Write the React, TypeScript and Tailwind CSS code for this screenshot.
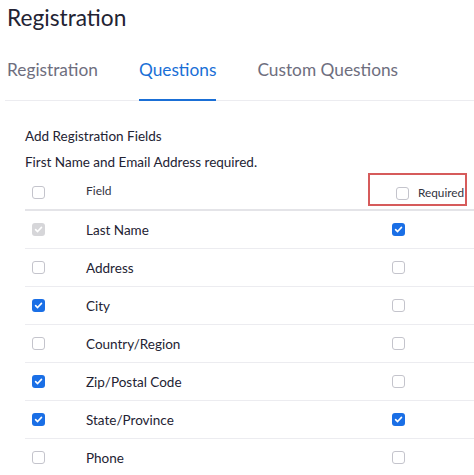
import React from 'react'

type Field = { name: string; on: boolean; required: boolean; locked?: boolean }

const fields: Field[] = [
  { name: 'Last Name', on: true, required: true, locked: true },
  { name: 'Address', on: false, required: false },
  { name: 'City', on: true, required: false },
  { name: 'Country/Region', on: false, required: false },
  { name: 'Zip/Postal Code', on: true, required: false },
  { name: 'State/Province', on: true, required: true },
  { name: 'Phone', on: false, required: false },
]

const Check = ({ checked, locked }: { checked: boolean; locked?: boolean }) => {
  if (!checked) {
    return <span className="block w-[13px] h-[13px] rounded-[3px] border border-[#c4c4cc] bg-white" />
  }
  return (
    <span
      className={
        locked
          ? 'flex items-center justify-center w-[13px] h-[13px] rounded-[3px] bg-[#d6d6d9]'
          : 'flex items-center justify-center w-[13px] h-[13px] rounded-[3px] bg-[#1a6fe6]'
      }
    >
      <svg width="9" height="9" viewBox="0 0 10 10" fill="none">
        <path d="M1.8 5.2 4 7.3 8.3 2.6" stroke="white" strokeWidth="1.8" strokeLinecap="round" strokeLinejoin="round" />
      </svg>
    </span>
  )
}

const tabs = ['Registration', 'Questions', 'Custom Questions']

export default function App() {
  return (
    <div className="w-[474px] h-[475px] overflow-hidden bg-white text-[#232333]" style={{ fontFamily: 'Lato, "Noto Sans", sans-serif' }}>
      <h1 className="pl-[7px] pt-[3px] text-[22.7px] leading-[30px] font-normal">Registration</h1>

      <div className="mt-[25px] ml-[5px] flex gap-[41px] border-b border-[#ececf0] pl-[2px]">
        {tabs.map((t, i) => (
          <div
            key={t}
            className={
              i === 1
                ? 'text-[17.3px] leading-[24px] pb-[17px] -mb-px border-b-[2px] border-[#1a6fd6] text-[#1a6fd6]'
                : 'text-[17.3px] leading-[24px] pb-[17px] -mb-px border-b-[2px] border-transparent text-[#6e6e7e]'
            }
          >
            {t}
          </div>
        ))}
      </div>

      <div className="pl-[25px]">
        <p className="pt-[25px] text-[13.5px] leading-[20px]">Add Registration Fields</p>
        <p className="mt-[6px] text-[13.5px] leading-[20px]">First Name and Email Address required.</p>

        <div className="flex items-start h-[39px] border-b-2 border-[#e4e4e8]">
          <div className="w-[61px] pl-[7px] pt-[14px]">
            <Check checked={false} />
          </div>
          <div className="flex-1 pt-[11px] text-[12px] leading-[16px] text-[#333340]">Field</div>
          <div className="mt-[1px] mr-[7px] w-[99px] h-[33px] border-2 border-[#d65b5b] flex items-start pl-[26px]">
            <span className="pt-[12px]">
              <Check checked={false} />
            </span>
            <span className="ml-[9px] pt-[9.5px] text-[11.8px] leading-[16px] text-[#333340]">Required</span>
          </div>
        </div>

        {fields.map((f) => (
          <div key={f.name} className="flex items-center h-[38px] border-b border-[#ececf0]">
            <div className="w-[61px] pl-[7px]">
              <Check checked={f.on} locked={f.locked} />
            </div>
            <div className="flex-1 text-[13.5px] leading-[20px]">{f.name}</div>
            <div className="w-[82px]">
              <Check checked={f.required} />
            </div>
          </div>
        ))}
      </div>
    </div>
  )
}
